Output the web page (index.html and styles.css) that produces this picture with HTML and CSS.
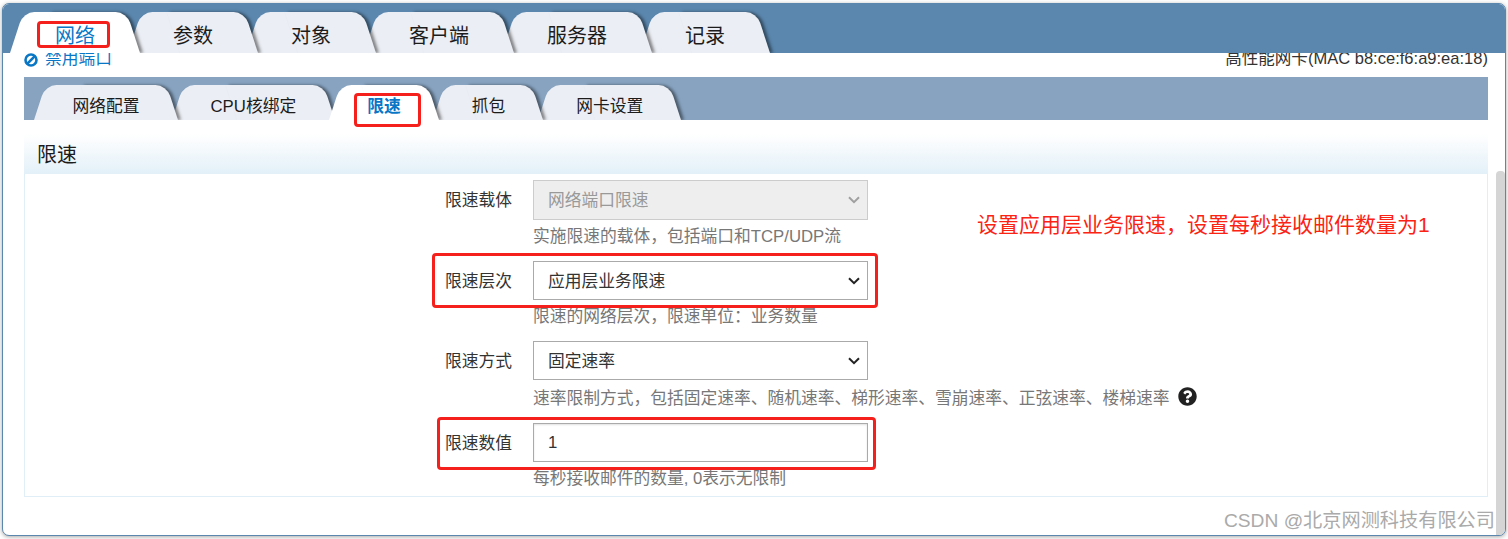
FILE: index.html
```html
<!DOCTYPE html>
<html lang="zh-CN">
<head>
<meta charset="utf-8">
<title>限速</title>
<link rel="stylesheet" href="styles.css">
</head>
<body>
<div class="window">
  <nav class="main-tabs">
    <a class="tab is-active">网络</a>
    <a class="tab">参数</a>
    <a class="tab">对象</a>
    <a class="tab">客户端</a>
    <a class="tab">服务器</a>
    <a class="tab">记录</a>
  </nav>
  <div class="content">
    <div class="port-row">
      <a class="port-link">
        <svg class="ban-icon" viewBox="0 0 14 14"><circle cx="7" cy="7" r="5.5"/><line x1="3.4" y1="10.6" x2="10.6" y2="3.4"/></svg>
        禁用端口
      </a>
      <span class="port-info">高性能网卡(MAC b8:ce:f6:a9:ea:18)</span>
    </div>
    <nav class="sub-tabs">
      <a class="subtab">网络配置</a>
      <a class="subtab">CPU核绑定</a>
      <a class="subtab is-active">限速</a>
      <a class="subtab">抓包</a>
      <a class="subtab">网卡设置</a>
    </nav>
    <section class="panel">
      <h2 class="panel-head">限速</h2>
      <div class="panel-body">
        <div class="form-row">
          <label class="form-label">限速载体</label>
          <select class="field field-tall" disabled><option>网络端口限速</option></select>
          <p class="hint">实施限速的载体，包括端口和TCP/UDP流</p>
        </div>
        <div class="form-row">
          <label class="form-label">限速层次</label>
          <select class="field"><option>应用层业务限速</option></select>
          <p class="hint">限速的网络层次，限速单位：业务数量</p>
        </div>
        <div class="form-row">
          <label class="form-label">限速方式</label>
          <select class="field"><option>固定速率</option></select>
          <p class="hint hint-help">速率限制方式，包括固定速率、随机速率、梯形速率、雪崩速率、正弦速率、楼梯速率
            <svg class="help-icon" viewBox="0 0 512 512"><path d="M504 256c0 136.997-111.043 248-248 248S8 392.997 8 256C8 119.083 119.043 8 256 8s248 111.083 248 248zM262.655 90c-54.497 0-89.255 22.957-116.549 63.758-3.536 5.286-2.353 12.415 2.715 16.258l34.699 26.31c5.205 3.947 12.621 3.008 16.665-2.122 17.864-22.658 30.113-35.797 57.303-35.797 20.429 0 45.698 13.148 45.698 32.958 0 14.976-12.363 22.667-32.534 33.976C247.128 238.528 216 254.941 216 296v4c0 6.627 5.373 12 12 12h56c6.627 0 12-5.373 12-12v-1.333c0-28.462 83.186-29.647 83.186-106.667 0-58.002-60.165-105.999-116.531-105.999zM256 338c-25.365 0-46 20.635-46 46 0 25.364 20.635 46 46 46s46-20.636 46-46c0-25.365-20.635-46-46-46z"/></svg>
          </p>
        </div>
        <div class="form-row form-row-last">
          <label class="form-label">限速数值</label>
          <input class="field field-input" value="1">
          <p class="hint">每秒接收邮件的数量, 0表示无限制</p>
        </div>
      </div>
    </section>
  </div>
  <div class="scrollbar"></div>
  <div class="mark mark-main"></div>
  <div class="mark mark-sub"></div>
  <div class="mark mark-level"></div>
  <div class="mark mark-value"></div>
  <div class="note">设置应用层业务限速，设置每秒接收邮件数量为1</div>
  <div class="watermark">CSDN @北京网测科技有限公司</div>
</div>
</body>
</html>
```

FILE: styles.css
```css
* { box-sizing: border-box; }
html, body { height: 100%; }
body {
  margin: 0;
  overflow: hidden;
  background: #fff;
  font-family: "Liberation Sans", "Noto Sans CJK SC", sans-serif;
  font-size: 16.75px;
  color: #333;
}
.window {
  position: relative;
  margin: 3px 2px 0;
  height: 533px;
  background: #fff;
  border: 1px solid #5b87ae;
  border-radius: 7px;
  box-shadow: 0 1px 4px rgba(0, 0, 0, .35);
  overflow: hidden;
}
.main-tabs {
  position: relative;
  z-index: 2;
  display: flex;
  height: 49px;
  padding: 8px 0 0 7px;
  background: #5b87ae;
  overflow: hidden;
}
.tab, .subtab {
  position: relative;
  display: block;
  text-align: center;
  color: #1c1c1c;
  white-space: nowrap;
}
.tab {
  height: 41px;
  margin-right: -12px;
  padding: 0 45px;
  font-size: 20px;
  line-height: 49px;
}
.subtab {
  height: 35px;
  margin-right: -6px;
  padding: 0 38.5px;
  font-size: 16.75px;
  line-height: 43px;
}
.tab::before, .tab::after, .subtab::before, .subtab::after {
  content: "";
  position: absolute;
  z-index: -1;
  top: 0;
  bottom: 0;
  width: 60%;
  background: #ebeef4;
}
.tab::before, .subtab::before {
  left: 0;
  border-top-left-radius: 11px;
  transform-origin: bottom left;
  transform: skewX(-18deg);
}
.tab::after, .subtab::after {
  right: 0;
  border-top-right-radius: 11px;
  transform-origin: bottom right;
  transform: skewX(18deg);
  box-shadow: 3px 0 3px rgba(0, 0, 0, .45);
}
.tab:nth-child(1), .subtab:nth-child(1) { z-index: 6; }
.tab:nth-child(2), .subtab:nth-child(2) { z-index: 5; }
.tab:nth-child(3), .subtab:nth-child(3) { z-index: 4; }
.tab:nth-child(4), .subtab:nth-child(4) { z-index: 3; }
.tab:nth-child(5), .subtab:nth-child(5) { z-index: 2; }
.tab:nth-child(6) { z-index: 1; }
.tab.is-active, .subtab.is-active { z-index: 7; color: #0a76c6; }
.subtab.is-active { font-weight: 700; }
.tab.is-active::before, .tab.is-active::after,
.subtab.is-active::before, .subtab.is-active::after { background: #fff; }

.content { padding: 0 17px 0 21px; }
.port-row {
  display: flex;
  justify-content: space-between;
  height: 24px;
  margin-top: -4px;
  margin-bottom: 4px;
  line-height: 20px;
}
.port-link { display: flex; align-items: center; gap: 7px; height: 20px; color: #0a76c6; }
.ban-icon {
  flex: none;
  width: 14px;
  height: 14px;
  margin-top: 1px;
  fill: none;
  stroke: #0a76c6;
  stroke-width: 2.6;
}
.port-info { color: #333; font-size: 16.55px; }

.sub-tabs {
  isolation: isolate;
  display: flex;
  height: 43px;
  padding: 8px 0 0 10px;
  background: #87a3c0;
  overflow: hidden;
}
.panel { margin-top: 14px; }
.panel-head {
  margin: 0;
  height: 40px;
  padding-left: 13px;
  font-size: 20px;
  font-weight: 400;
  line-height: 42px;
  color: #1c1c1c;
  background: linear-gradient(#fff, #e3f0f8);
}
.panel-body {
  padding: 6px 0 5px 420px;
  border: 1px solid #e0eef8;
  border-top: 0;
}
.form-row {
  display: grid;
  grid-template-columns: 88px 335px;
  margin-bottom: 12px;
}
.form-row-last { margin-bottom: 0; }
.form-label { align-self: center; padding-bottom: 2px; color: #333; }
.field {
  appearance: none;
  width: 335px;
  height: 39px;
  padding: 1px 14px 0;
  background-color: #fff;
  background-image: url("data:image/svg+xml;utf8,<svg xmlns='http://www.w3.org/2000/svg' width='12' height='8' viewBox='0 0 12 8'><path d='M1 1.2l5 5 5-5' fill='none' stroke='%23222' stroke-width='2'/></svg>");
  background-repeat: no-repeat;
  background-position: right 7px center;
  border: 1px solid #aaa;
  border-radius: 0;
  font: inherit;
  color: #333;
  outline: none;
}
.field-tall { height: 40px; padding-top: 0; }
.field:disabled {
  background-color: #eee;
  background-image: url("data:image/svg+xml;utf8,<svg xmlns='http://www.w3.org/2000/svg' width='12' height='8' viewBox='0 0 12 8'><path d='M1 1.2l5 5 5-5' fill='none' stroke='%23a0a0a0' stroke-width='2'/></svg>");
  border-color: #ccc;
  color: #999;
  opacity: 1;
}
.field-input {
  padding-top: 0;
  background-image: none;
  box-shadow: inset 0 1px 2px rgba(0, 0, 0, .12);
}
.hint {
  grid-column: 2;
  display: flex;
  align-items: center;
  gap: 8px;
  width: max-content;
  margin: 5px 0 0;
  height: 24px;
  line-height: 24px;
  white-space: nowrap;
  color: #777;
}
.hint-help { margin-top: 7px; }
.help-icon { flex: none; width: 19px; height: 19px; fill: #222; margin-top: -6px; }

.scrollbar {
  position: absolute;
  top: 167px;
  right: 0;
  bottom: 0;
  width: 9px;
  background: #d5d5d5;
  border-radius: 4px 4px 0 0;
}
.mark {
  position: absolute;
  z-index: 3;
  border: 3px solid #f5201c;
  border-radius: 4px;
}
.mark-main { left: 34px; top: 17px; width: 73px; height: 27px; }
.mark-sub { left: 351px; top: 89px; width: 67px; height: 34px; }
.mark-level { left: 429px; top: 249px; width: 446px; height: 55px; }
.mark-value { left: 434px; top: 413px; width: 439px; height: 53px; }
.note {
  position: absolute;
  left: 974px;
  top: 206px;
  font-size: 21px;
  line-height: 30px;
  color: #fb2314;
}
.watermark {
  position: absolute;
  right: 10px;
  top: 503px;
  font-size: 19.2px;
  line-height: 28px;
  color: #aaa;
}
```
